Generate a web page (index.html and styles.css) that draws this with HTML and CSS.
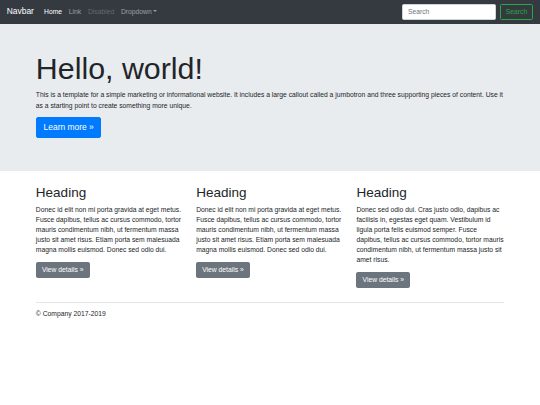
FILE: index.html
```html
<!DOCTYPE html>
<html lang="en">
<head>
<meta charset="utf-8">
<title>Jumbotron Template</title>
<link rel="stylesheet" href="styles.css">
</head>
<body>
<nav class="navbar">
  <a class="navbar-brand" href="#">Navbar</a>
  <div class="navbar-collapse">
    <ul class="navbar-nav">
      <li><a class="nav-link active" href="#">Home</a></li>
      <li><a class="nav-link" href="#">Link</a></li>
      <li><a class="nav-link disabled" href="#">Disabled</a></li>
      <li><a class="nav-link dropdown-toggle" href="#">Dropdown</a></li>
    </ul>
    <form class="form-inline">
      <input class="form-control" type="text" placeholder="Search">
      <button class="btn btn-outline-success" type="button">Search</button>
    </form>
  </div>
</nav>

<main class="main">
  <div class="jumbotron">
    <div class="container">
      <h1 class="display-3">Hello, world!</h1>
      <p>This is a template for a simple marketing or informational website. It includes a large callout called a jumbotron and three supporting pieces of content. Use it as a starting point to create something more unique.</p>
      <p class="btn-line-lg"><a class="btn btn-primary btn-lg" href="#">Learn more &raquo;</a></p>
    </div>
  </div>

  <div class="container">
    <div class="row">
      <div class="col">
        <h2>Heading</h2>
        <p>Donec id elit non mi porta gravida at eget metus. Fusce dapibus, tellus ac cursus commodo, tortor mauris condimentum nibh, ut fermentum massa justo sit amet risus. Etiam porta sem malesuada magna mollis euismod. Donec sed odio dui.</p>
        <p class="btn-line"><a class="btn btn-secondary" href="#">View details &raquo;</a></p>
      </div>
      <div class="col">
        <h2>Heading</h2>
        <p>Donec id elit non mi porta gravida at eget metus. Fusce dapibus, tellus ac cursus commodo, tortor mauris condimentum nibh, ut fermentum massa justo sit amet risus. Etiam porta sem malesuada magna mollis euismod. Donec sed odio dui.</p>
        <p class="btn-line"><a class="btn btn-secondary" href="#">View details &raquo;</a></p>
      </div>
      <div class="col">
        <h2>Heading</h2>
        <p>Donec sed odio dui. Cras justo odio, dapibus ac facilisis in, egestas eget quam. Vestibulum id ligula porta felis euismod semper. Fusce dapibus, tellus ac cursus commodo, tortor mauris condimentum nibh, ut fermentum massa justo sit amet risus.</p>
        <p class="btn-line"><a class="btn btn-secondary" href="#">View details &raquo;</a></p>
      </div>
    </div>
    <hr class="divider">
  </div>
</main>

<footer class="container footer">
  <p>&copy; Company 2017-2019</p>
</footer>
</body>
</html>
```

FILE: styles.css
```css
html {
  font-size: 6.75px;
}
* {
  box-sizing: border-box;
}
body {
  margin: 0;
  font-family: "Liberation Sans", Arial, sans-serif;
  font-size: 1rem;
  line-height: 1.5;
  color: #212529;
  background: #fff;
}
a {
  text-decoration: none;
}
p {
  margin: 0 0 1rem;
}

/* Navbar */
.navbar {
  display: flex;
  align-items: center;
  height: 3.5rem;
  background: #343a40;
  padding: 0 1rem;
}
.navbar-brand {
  color: #fff;
  font-size: 1.25rem;
  line-height: 1.5;
  margin-right: 1rem;
}
.navbar-collapse {
  display: flex;
  align-items: center;
  flex-grow: 1;
}
.navbar-nav {
  display: flex;
  list-style: none;
  margin: 0 auto 0 0;
  padding: 0;
}
.nav-link {
  display: block;
  padding: 0 0.5rem;
  color: rgba(255, 255, 255, 0.5);
}
.nav-link.active {
  color: #fff;
}
.nav-link.disabled {
  color: rgba(255, 255, 255, 0.25);
}
.dropdown-toggle::after {
  content: "";
  display: inline-block;
  margin-left: 0.255em;
  vertical-align: 0.255em;
  border-top: 0.3em solid;
  border-right: 0.3em solid transparent;
  border-left: 0.3em solid transparent;
}
.form-inline {
  display: flex;
  align-items: center;
  margin: 0;
}
.form-control {
  width: 14rem;
  height: 2.375rem;
  padding: 0 0.75rem;
  font-family: inherit;
  font-size: 1rem;
  color: #495057;
  background: #fff;
  border: 1px solid #ced4da;
  border-radius: 0.25rem;
  margin-right: 0.5rem;
}
.form-control::placeholder {
  color: #6c757d;
}

/* Buttons */
.btn {
  display: inline-flex;
  align-items: center;
  justify-content: center;
  height: 2.375rem;
  font-family: inherit;
  font-size: 1rem;
  line-height: 1.5;
  padding: 0 0.75rem;
  border: 1px solid transparent;
  border-radius: 0.25rem;
  vertical-align: top;
}
.btn-outline-success {
  color: #28a745;
  background: transparent;
  border-color: #28a745;
}
.btn-primary {
  color: #fff;
  background: #007bff;
  border-color: #007bff;
}
.btn-secondary {
  color: #fff;
  background: #6c757d;
  border-color: #6c757d;
}
.btn-lg {
  height: 3rem;
  padding: 0 1rem;
  font-size: 1.25rem;
  border-radius: 0.3rem;
}
.btn-line {
  height: 2.375rem;
}
.btn-line-lg {
  height: 3rem;
}

/* Layout */
.container {
  width: 100%;
  max-width: 71.25rem;
  margin: 0 auto;
  padding: 0 0.9375rem;
}
.jumbotron {
  background: #e9ecef;
  padding: 4rem 0;
  margin-bottom: 2rem;
}
.display-3 {
  font-size: 4.5rem;
  font-weight: 300;
  line-height: 1.2;
  margin: 0 0 0.5rem;
}
.row {
  display: flex;
  margin: 0 -0.9375rem;
}
.col {
  flex: 0 0 33.3333%;
  max-width: 33.3333%;
  padding: 0 0.9375rem;
}
h2 {
  font-size: 2rem;
  font-weight: 500;
  line-height: 1.2;
  margin: 0 0 0.5rem;
}
.divider {
  margin: 1rem 0;
  border: 0;
  height: 1px;
  background: rgba(0, 0, 0, 0.1);
}
```
